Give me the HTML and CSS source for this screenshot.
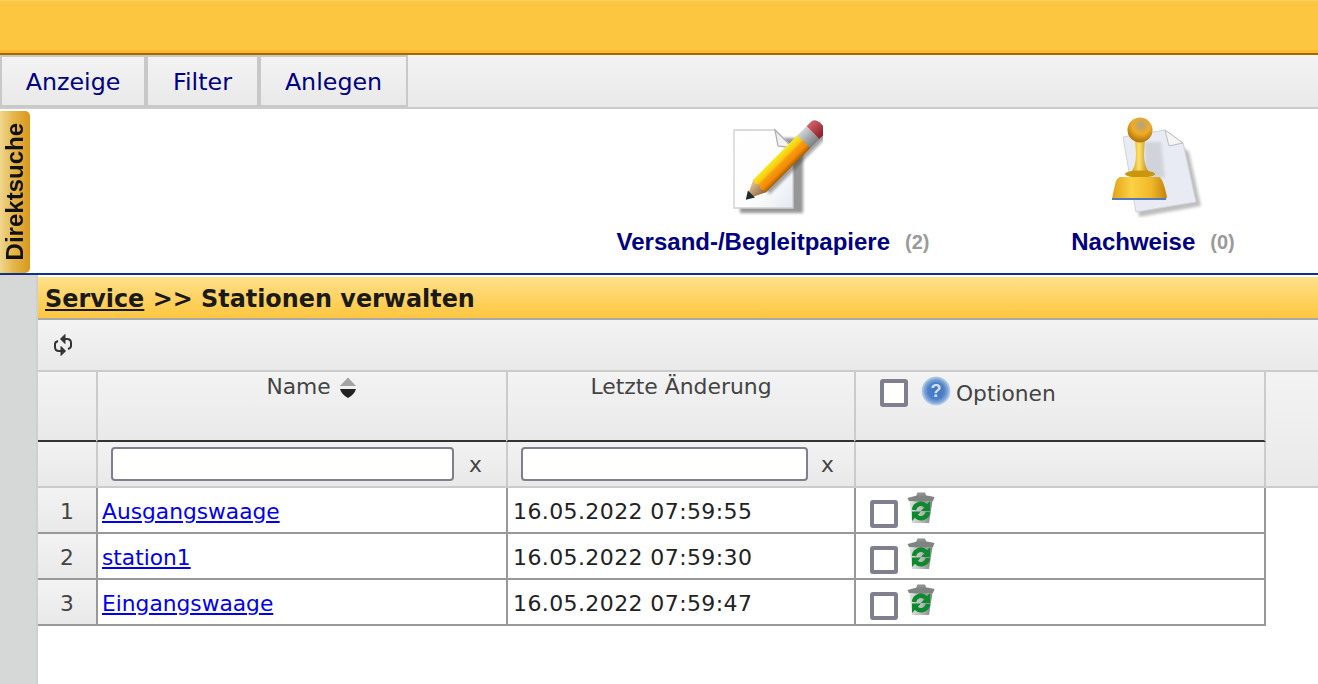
FILE: index.html
```html
<!DOCTYPE html>
<html lang="de">
<head>
<meta charset="utf-8">
<title>Stationen verwalten</title>
<link rel="stylesheet" href="styles.css">
</head>
<body>
<svg class="defs" width="0" height="0" aria-hidden="true">
  <defs>
    <linearGradient id="binBody" x1="0" y1="0" x2="1" y2="0"><stop offset="0" stop-color="#dfe2e0"/><stop offset=".5" stop-color="#b9bdbb"/><stop offset="1" stop-color="#7b817e"/></linearGradient>
    <filter id="binSoft"><feGaussianBlur stdDeviation=".35"/></filter>
    <symbol id="trash" viewBox="0 0 28 32">
      <g filter="url(#binSoft)">
        <path d="M9 4 L10.500 0.500 H18 L19.500 4 Z" fill="#8d918e"/>
        <path d="M0.500 6 Q14 1 27.500 5 L26 9 Q14 11 2 9 Z" fill="#7f8482"/>
        <path d="M2.500 9 L5 31 H22 L25.500 9 Q14 11 2.500 9 Z" fill="url(#binBody)"/>
        <g fill="none" stroke="#0b8a2e" stroke-width="4.500">
          <path d="M7 18 A7 7 0 0 1 19 14"/>
          <path d="M21 20 A7 7 0 0 1 9 24"/>
        </g>
        <path d="M23 9 V19 H14 Z" fill="#0b8a2e"/>
        <path d="M5 29 V19.500 H14 Z" fill="#0b8a2e"/>
      </g>
    </symbol>
  </defs>
</svg>

<header class="topbar"></header>

<nav class="menu">
  <a class="menu-item" href="#">Anzeige</a>
  <a class="menu-item" href="#">Filter</a>
  <a class="menu-item" href="#">Anlegen</a>
</nav>

<section class="shortcuts">
  <div class="direct-tab"><span>Direktsuche</span></div>
  <a class="shortcut shortcut-paper" href="#">
    <svg class="pic" width="100" height="106" viewBox="0 0 100 106">
      <defs>
        <linearGradient id="paperFill" x1="0" y1="0" x2="1" y2="1"><stop offset="0" stop-color="#fff"/><stop offset=".6" stop-color="#fdfdfe"/><stop offset="1" stop-color="#e4e9f1"/></linearGradient>
        <linearGradient id="pencilBody" x1="0" y1="0" x2="0" y2="1"><stop offset="0" stop-color="#f6ea2a"/><stop offset=".35" stop-color="#f9c70c"/><stop offset=".45" stop-color="#fb9c0a"/><stop offset=".75" stop-color="#f08a06"/><stop offset="1" stop-color="#a85c04"/></linearGradient>
        <linearGradient id="pencilWood" x1="0" y1="0" x2="0" y2="1"><stop offset="0" stop-color="#e8c9a0"/><stop offset="1" stop-color="#8c6238"/></linearGradient>
        <linearGradient id="pencilMetal" x1="0" y1="0" x2="0" y2="1"><stop offset="0" stop-color="#d2d5d8"/><stop offset="1" stop-color="#7a7f84"/></linearGradient>
        <linearGradient id="pencilRubber" x1="0" y1="0" x2="0" y2="1"><stop offset="0" stop-color="#d0656a"/><stop offset="1" stop-color="#8c1c26"/></linearGradient>
        <filter id="soft" x="-20%" y="-20%" width="140%" height="140%"><feGaussianBlur stdDeviation="1.600"/></filter>
        <filter id="tiny"><feGaussianBlur stdDeviation=".35"/></filter>
      </defs>
      <path d="M17 26 H80 V101 H17 Z" fill="#7d7d7d" opacity=".8" filter="url(#soft)"/>
      <path d="M11 18 H52 L70 36 V96 H11 Z" fill="url(#paperFill)" stroke="#cfcfcf" stroke-width="1.300"/>
      <path d="M52 18 L55 34 L70 36 Z" fill="#f2f2f2" stroke="#b0b0b0" stroke-width="1.300"/>
      <g filter="url(#tiny)">
        <g transform="translate(23.500 87) rotate(-45)">
          <rect x="20" y="4" width="86" height="9" fill="#333" opacity=".45" filter="url(#soft)"/>
          <path d="M0 0 L19 -9 H83 V9 H19 Z" fill="url(#pencilBody)"/>
          <path d="M0 0 L19 -9 L17 -5 L19 -1 L17 3 L19 9 Z" fill="url(#pencilWood)"/>
          <path d="M-1 0 L7 -5 V5 Z" fill="#1f2a33"/>
          <rect x="81" y="-9" width="13" height="18" fill="url(#pencilMetal)"/>
          <path d="M94 -9 H101 Q106 -8 106 0 Q106 8 101 9 H94 Z" fill="url(#pencilRubber)"/>
        </g>
      </g>
    </svg>
    <span class="shortcut-label"><b>Versand-/Begleitpapiere</b><i>(2)</i></span>
  </a>
  <a class="shortcut shortcut-stamp" href="#">
    <svg class="pic" width="100" height="106" viewBox="0 0 100 106">
      <defs>
        <linearGradient id="stampNeck" x1="0" y1="0" x2="1" y2="0"><stop offset="0" stop-color="#d49a12"/><stop offset=".45" stop-color="#fde268"/><stop offset="1" stop-color="#bb8210"/></linearGradient>
        <linearGradient id="stampBase" x1="0" y1="0" x2="1" y2="0"><stop offset="0" stop-color="#e2a215"/><stop offset=".35" stop-color="#fbd145"/><stop offset=".7" stop-color="#f2b92a"/><stop offset="1" stop-color="#c2840f"/></linearGradient>
        <radialGradient id="stampKnob" cx=".55" cy=".3" r=".65"><stop offset="0" stop-color="#a9a291"/><stop offset=".3" stop-color="#d6a648"/><stop offset=".55" stop-color="#efad27"/><stop offset="1" stop-color="#b8770b"/></radialGradient>
      </defs>
      <path d="M26 30 L64 22 L86 40 L98 94 L36 105 Z" fill="#888" opacity=".55" filter="url(#soft)"/>
      <path d="M20 25 L62 18 L80 31 L93 90 L33 100 Z" fill="#e8ebf3" stroke="#d0d3da"/>
      <path d="M62 18 L66 34 L80 31 Z" fill="#f4f4f4" stroke="#bdbdbd"/>
      <path d="M42 30 L58 30 L62 66 H42 Z" fill="#8f8f96" opacity=".25" filter="url(#soft)"/>
      <g filter="url(#tiny)">
        <path d="M32 27 H42 L41 42 Q41 54 46 60 H28 Q33 54 33 42 Z" fill="url(#stampNeck)"/>
        <circle cx="37" cy="18" r="12.500" fill="url(#stampKnob)"/>
        <ellipse cx="37" cy="62" rx="15" ry="3.500" fill="#c9960f"/>
        <path d="M17 65 H56 Q60 66 64 85 L63 87 H9 Q10 81 12 73 Q13 66 17 65 Z" fill="url(#stampBase)"/>
        <path d="M9 86 H63 V88 H9 Z" fill="#5878b8"/>
      </g>
    </svg>
    <span class="shortcut-label"><b>Nachweise</b><i>(0)</i></span>
  </a>
</section>

<div class="layout">
  <aside class="rail"></aside>
  <main class="content">
    <h1 class="title"><a href="#">Service</a> &gt;&gt; Stationen verwalten</h1>
    <div class="toolbar">
      <svg class="refresh" width="22" height="24" viewBox="0 0 22 24" fill="none" stroke="#333" stroke-width="2">
        <path d="M9 6 H15 Q19 6 19 10 V13 Q19 15 16 16"/>
        <path d="M13 18 H7 Q3 18 3 14 V11 Q3 9 6 8"/>
        <path d="M13 1.500 L8.500 6 L13 10.500 Z" fill="#333" stroke-width="1"/>
        <path d="M9 13.500 L13.500 18 L9 22.500 Z" fill="#333" stroke-width="1"/>
      </svg>
    </div>

    <div class="head-band">
      <div class="row row-head">
        <div class="cell"></div>
        <div class="cell head-cell head-name">Name
          <svg class="sort" width="16" height="22" viewBox="0 0 16 22"><path d="M8 0.500 L16 9 H0 Z" fill="#a4a4a4"/><path d="M0 12 H16 Q14 18 8 21 Q2 18 0 12 Z" fill="#222"/></svg>
        </div>
        <div class="cell head-cell head-date">Letzte Änderung</div>
        <div class="cell head-options">
          <span class="check check-head"></span>
          <svg class="help" width="30" height="30" viewBox="0 0 30 30">
            <defs><radialGradient id="helpFill" cx=".5" cy=".5" r=".5"><stop offset="0" stop-color="#3f74c4"/><stop offset=".55" stop-color="#4a80c8"/><stop offset=".8" stop-color="#7fa5d8"/><stop offset="1" stop-color="#c4d6ec"/></radialGradient></defs>
            <circle cx="15" cy="15" r="14.500" fill="url(#helpFill)"/>
            <text class="help-mark" x="15" y="21">?</text>
          </svg>
          <span>Optionen</span>
        </div>
      </div>

      <div class="row row-filter">
        <div class="cell"></div>
        <div class="cell filter-cell name-filter"><input type="text" aria-label="Name"><span>x</span></div>
        <div class="cell filter-cell date-filter"><input type="text" aria-label="Letzte Änderung"><span>x</span></div>
        <div class="cell"></div>
      </div>
    </div>

    <div class="row row-data">
      <div class="cell num">1</div>
      <div class="cell"><a href="#">Ausgangswaage</a></div>
      <div class="cell date">16.05.2022 07:59:55</div>
      <div class="cell opts"><span class="check"></span><svg class="bin" width="28" height="32"><use href="#trash"/></svg></div>
    </div>
    <div class="row row-data">
      <div class="cell num">2</div>
      <div class="cell"><a href="#">station1</a></div>
      <div class="cell date">16.05.2022 07:59:30</div>
      <div class="cell opts"><span class="check"></span><svg class="bin" width="28" height="32"><use href="#trash"/></svg></div>
    </div>
    <div class="row row-data">
      <div class="cell num">3</div>
      <div class="cell"><a href="#">Eingangswaage</a></div>
      <div class="cell date">16.05.2022 07:59:47</div>
      <div class="cell opts"><span class="check"></span><svg class="bin" width="28" height="32"><use href="#trash"/></svg></div>
    </div>
  </main>
</div>
</body>
</html>
```
FILE: styles.css
```css
* { box-sizing: border-box; }
html, body { margin: 0; height: 100%; overflow: hidden; }
body {
  font-family: "DejaVu Sans", Verdana, sans-serif;
  font-size: 21.75px;
  color: #333;
  background: #fff;
  display: flex;
  flex-direction: column;
}
.defs { position: absolute; }

.topbar {
  height: 55px;
  flex: none;
  background: #fcc641;
  border-top: 1px solid #fdd062;
  box-shadow: inset 0 -3px 0 #fdb92e;
  border-bottom: 2px solid #a06a00;
}

.menu {
  height: 54px;
  flex: none;
  display: flex;
  background: linear-gradient(#f3f3f3, #e9e9e9);
  border-bottom: 2px solid #cbcbcb;
}
.menu-item {
  height: 52px;
  display: flex;
  align-items: center;
  justify-content: center;
  padding-top: 2px;
  border: 2px solid #c8c8c8;
  color: #000080;
  text-decoration: none;
  font-size: 23.75px;
  background: linear-gradient(#f3f3f3, #e9e9e9);
}
.menu-item:nth-child(1) { width: 146px; }
.menu-item:nth-child(2) { width: 113px; }
.menu-item:nth-child(3) { width: 149px; }

.shortcuts {
  height: 166px;
  flex: none;
  display: flex;
  background: #fff;
  border-bottom: 2px solid #0c3384;
}
.direct-tab {
  width: 30px;
  height: 162px;
  margin-top: 2px;
  display: flex;
  align-items: center;
  justify-content: center;
  border-radius: 0 5px 5px 0;
  background: linear-gradient(to right, #f0d68f, #e4b64a 45%, #d9981c);
}
.direct-tab span {
  writing-mode: vertical-rl;
  transform: rotate(180deg);
  font: bold 24px "Liberation Sans", Arial, sans-serif;
  color: #111;
  filter: blur(.4px);
}
.shortcut {
  display: flex;
  flex-direction: column;
  align-items: center;
  text-decoration: none;
}
.shortcut-paper { width: 312px; margin-left: 587px; margin-right: 143px; }
.shortcut-stamp { width: 162px; }
.pic { flex: none; margin-top: 3px; margin-bottom: 10px; }
.shortcut-label { display: flex; font: bold 24px "Liberation Sans", Arial, sans-serif; color: #000080; }
.shortcut-label b { font-weight: bold; }
.shortcut-label i {
  font-style: normal;
  font-size: 20px;
  color: #9a9a9a;
  margin-left: 15px;
  align-self: center;
}

.layout { flex: 1; display: flex; min-height: 0; }
.rail { width: 38px; flex: none; background: #d6d8d8; border-right: 2px solid #cfcfcf; }
.content { flex: 1; min-width: 0; padding-top: 2px; }

.title {
  margin: 0;
  height: 43px;
  padding-left: 7px;
  line-height: 44px;
  font-size: 23.9px;
  font-weight: bold;
  color: #1a1a1a;
  background: linear-gradient(#ffe08a, #fdc63f);
  border-bottom: 2px solid #a8a8a8;
}
.title a { color: #1a1a1a; }

.toolbar {
  height: 52px;
  display: flex;
  align-items: center;
  padding-left: 14px;
  background: linear-gradient(#f3f3f3, #e9e9e9);
  border-bottom: 2px solid #cbcbcb;
}
.refresh { filter: blur(.35px); }

.head-band {
  background: linear-gradient(#f3f3f3, #e9e9e9);
  border-bottom: 2px solid #cbcbcb;
}

.row {
  display: grid;
  width: 1228px;
  grid-template-columns: 58px 410px 348px 412px;
}
.row-head {
  height: 70px;
  background: linear-gradient(#f3f3f3, #e9e9e9);
}
.row-head .cell:last-child { border-right: 2px solid #cbcbcb; }
.row-head .cell { border-bottom: 2px solid #333; }
.cell { border-left: 2px solid #cbcbcb; }
.cell:first-child { border-left: 0; }
.head-cell {
  text-align: center;
  padding-top: 1px;
  line-height: 27px;
  color: #444;
}
.head-name { padding-left: 18px; }
.head-date { font-size: 21.9px; }
.sort { vertical-align: -5px; margin-left: 2px; }
.head-options {
  display: flex;
  align-items: flex-start;
  color: #444;
  padding-top: 8px;
  padding-left: 24px;
  line-height: 28px;
}
.check {
  display: block;
  flex: none;
  width: 28px;
  height: 28px;
  background: #fff;
  border: 4px solid #7f7f8f;
  border-radius: 3px;
}
.check-head { margin-top: -1px; }
.help { margin: -4px 5px 0 13px; flex: none; }
.help-mark { font: bold 18px "Liberation Sans", sans-serif; fill: #d3dff0; text-anchor: middle; }

.row-filter {
  height: 44px;
  background: linear-gradient(#f2f2f2, #e9e9e9);
}
.row-filter .cell:last-child { border-right: 2px solid #cbcbcb; }
.filter-cell { display: flex; align-items: center; padding-left: 13px; }
.filter-cell input {
  flex: none;
  height: 34px;
  padding: 0;
  border: 2px solid #7f7f8f;
  border-radius: 4px;
  background: #fff;
}
.name-filter input { width: 343px; }
.date-filter input { width: 287px; }
.filter-cell span { margin-left: 15px; color: #444; }
.date-filter span { margin-left: 13px; }

.row-data {
  height: 46px;
  border-bottom: 2px solid #999;
  border-right: 2px solid #999;
  line-height: 47px;
  color: #222;
}
.row-data .cell { height: 44px; border-left-color: #999; padding-left: 4px; }
.row-data .cell:first-child { padding-left: 0; }
.row-data .date { padding-left: 5px; font-size: 22px; letter-spacing: .4px; }
.row-data a { color: #0000ee; }
.num {
  text-align: center;
  color: #444;
  background: linear-gradient(#f3f3f3, #e9e9e9);
}
.row-data .opts {
  display: flex;
  align-items: flex-start;
  padding-left: 14px;
}
.opts .check { margin-top: 12px; }
.bin { flex: none; margin: 4px 0 0 9px; }
```
